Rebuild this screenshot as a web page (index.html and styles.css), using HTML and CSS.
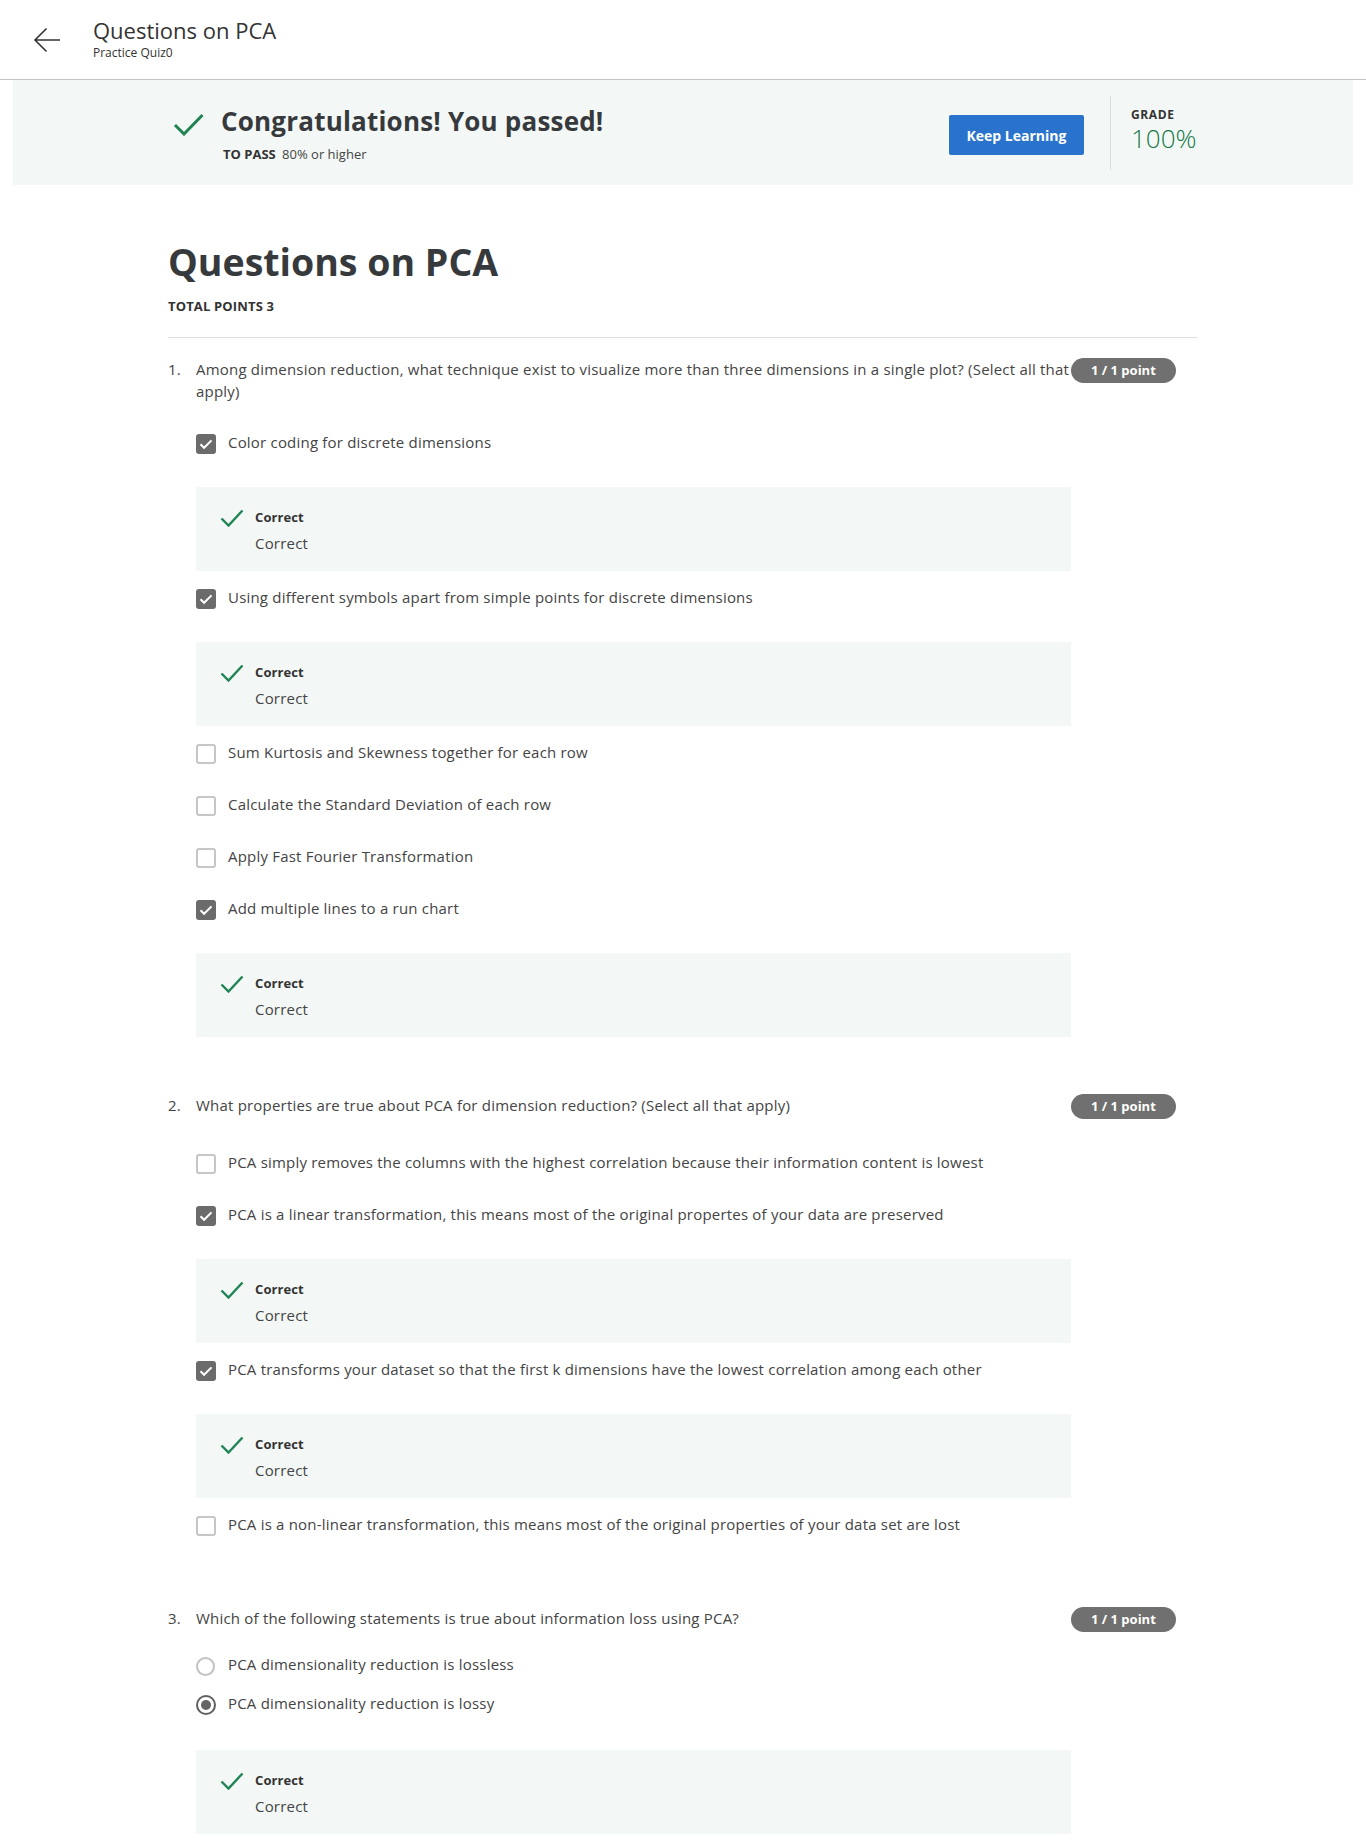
FILE: index.html
```html
<!DOCTYPE html>
<html lang="en">
<head>
<meta charset="utf-8">
<title>Questions on PCA</title>
<link rel="stylesheet" href="styles.css">
</head>
<body>
<header class="topbar">
  <span class="back" aria-label="Back">
    <svg width="28" height="26" viewBox="0 0 28 26"><path d="M27 13H2M13.5 1.5L2 13l11.5 11.5" fill="none" stroke="#333" stroke-width="1.6"/></svg>
  </span>
  <div class="topbar-titles">
    <div class="topbar-title">Questions on PCA</div>
    <div class="topbar-sub">Practice Quiz0</div>
  </div>
</header>

<section class="banner">
  <div class="banner-inner">
    <div class="pass">
      <svg class="pass-icon" width="31" height="23" viewBox="0 0 31 23"><path d="M2 12l9 9L29.5 2" fill="none" stroke="#1f8354" stroke-width="3"/></svg>
      <div>
        <div class="pass-title">Congratulations! You passed!</div>
        <div class="pass-sub"><b>TO PASS</b> 80% or higher</div>
      </div>
    </div>
    <button class="keep">Keep Learning</button>
    <div class="grade">
      <div class="grade-label">GRADE</div>
      <div class="grade-value">100%</div>
    </div>
  </div>
</section>

<main class="content">
  <h1 class="quiz-title">Questions on PCA</h1>
  <div class="total">TOTAL POINTS 3</div>
  <hr class="rule">

  <section class="question">
    <div class="q-num">1.</div>
    <div class="q-text">Among dimension reduction, what technique exist to visualize more than three dimensions in a single plot? (Select all that apply)</div>
    <div class="badge">1 / 1 point</div>
    <div class="options options-wrapped">
      <div class="option"><span class="box checked"><svg width="20" height="20" viewBox="0 0 20 20"><path d="M4.5 10.2l3.6 3.6L15.5 6.4" fill="none" stroke="#fff" stroke-width="2"/></svg></span><span class="label">Color coding for discrete dimensions</span></div>
      <div class="feedback"><svg class="fb-icon" width="24" height="18" viewBox="0 0 24 18"><path d="M1.5 9.5l7 7L22.5 1.5" fill="none" stroke="#1f8354" stroke-width="2.4"/></svg><div><div class="fb-title">Correct</div><div class="fb-text">Correct</div></div></div>
      <div class="option"><span class="box checked"><svg width="20" height="20" viewBox="0 0 20 20"><path d="M4.5 10.2l3.6 3.6L15.5 6.4" fill="none" stroke="#fff" stroke-width="2"/></svg></span><span class="label">Using different symbols apart from simple points for discrete dimensions</span></div>
      <div class="feedback"><svg class="fb-icon" width="24" height="18" viewBox="0 0 24 18"><path d="M1.5 9.5l7 7L22.5 1.5" fill="none" stroke="#1f8354" stroke-width="2.4"/></svg><div><div class="fb-title">Correct</div><div class="fb-text">Correct</div></div></div>
      <div class="option"><span class="box"></span><span class="label">Sum Kurtosis and Skewness together for each row</span></div>
      <div class="option"><span class="box"></span><span class="label">Calculate the Standard Deviation of each row</span></div>
      <div class="option"><span class="box"></span><span class="label">Apply Fast Fourier Transformation</span></div>
      <div class="option"><span class="box checked"><svg width="20" height="20" viewBox="0 0 20 20"><path d="M4.5 10.2l3.6 3.6L15.5 6.4" fill="none" stroke="#fff" stroke-width="2"/></svg></span><span class="label">Add multiple lines to a run chart</span></div>
      <div class="feedback"><svg class="fb-icon" width="24" height="18" viewBox="0 0 24 18"><path d="M1.5 9.5l7 7L22.5 1.5" fill="none" stroke="#1f8354" stroke-width="2.4"/></svg><div><div class="fb-title">Correct</div><div class="fb-text">Correct</div></div></div>
    </div>
  </section>

  <section class="question">
    <div class="q-num">2.</div>
    <div class="q-text">What properties are true about PCA for dimension reduction? (Select all that apply)</div>
    <div class="badge">1 / 1 point</div>
    <div class="options options-loose">
      <div class="option"><span class="box"></span><span class="label">PCA simply removes the columns with the highest correlation because their information content is lowest</span></div>
      <div class="option"><span class="box checked"><svg width="20" height="20" viewBox="0 0 20 20"><path d="M4.5 10.2l3.6 3.6L15.5 6.4" fill="none" stroke="#fff" stroke-width="2"/></svg></span><span class="label">PCA is a linear transformation, this means most of the original propertes of your data are preserved</span></div>
      <div class="feedback"><svg class="fb-icon" width="24" height="18" viewBox="0 0 24 18"><path d="M1.5 9.5l7 7L22.5 1.5" fill="none" stroke="#1f8354" stroke-width="2.4"/></svg><div><div class="fb-title">Correct</div><div class="fb-text">Correct</div></div></div>
      <div class="option"><span class="box checked"><svg width="20" height="20" viewBox="0 0 20 20"><path d="M4.5 10.2l3.6 3.6L15.5 6.4" fill="none" stroke="#fff" stroke-width="2"/></svg></span><span class="label">PCA transforms your dataset so that the first k dimensions have the lowest correlation among each other</span></div>
      <div class="feedback"><svg class="fb-icon" width="24" height="18" viewBox="0 0 24 18"><path d="M1.5 9.5l7 7L22.5 1.5" fill="none" stroke="#1f8354" stroke-width="2.4"/></svg><div><div class="fb-title">Correct</div><div class="fb-text">Correct</div></div></div>
      <div class="option"><span class="box"></span><span class="label">PCA is a non-linear transformation, this means most of the original properties of your data set are lost</span></div>
    </div>
  </section>

  <section class="question">
    <div class="q-num">3.</div>
    <div class="q-text">Which of the following statements is true about information loss using PCA?</div>
    <div class="badge">1 / 1 point</div>
    <div class="options">
      <div class="option radio-option"><span class="radio"></span><span class="label">PCA dimensionality reduction is lossless</span></div>
      <div class="option radio-option"><span class="radio selected"></span><span class="label">PCA dimensionality reduction is lossy</span></div>
      <div class="feedback feedback-radio"><svg class="fb-icon" width="24" height="18" viewBox="0 0 24 18"><path d="M1.5 9.5l7 7L22.5 1.5" fill="none" stroke="#1f8354" stroke-width="2.4"/></svg><div><div class="fb-title">Correct</div><div class="fb-text">Correct</div></div></div>
    </div>
  </section>
</main>
</body>
</html>
```

FILE: styles.css
```css
* { box-sizing: border-box; }

body {
  margin: 0;
  background: #fff;
  color: #444;
  font-family: "Open Sans", "Liberation Sans", sans-serif;
}

/* top bar */
.topbar {
  height: 80px;
  border-bottom: 1px solid #c4c4c4;
  display: flex;
  align-items: center;
  padding-left: 33px;
}
.back {
  display: flex;
  width: 28px;
  height: 26px;
  margin-right: 32px;
}
.topbar-titles {
  align-self: flex-start;
  margin-top: 16px;
}
.topbar-title {
  font-size: 22px;
  line-height: 28px;
  color: #333;
  margin-bottom: 1px;
}
.topbar-sub {
  font-size: 12px;
  line-height: 16px;
  color: #333;
}

/* pass banner */
.banner {
  margin: 0 13px;
  height: 105px;
  background: #f3f8f6;
  display: flex;
  justify-content: center;
}
.banner-inner {
  width: 1030px;
  display: flex;
  align-items: flex-start;
}
.pass {
  flex: 1;
  display: flex;
  align-items: flex-start;
  gap: 17px;
  padding-left: 5px;
  margin-top: 24px;
}
.pass-icon { margin-top: 9px; flex: none; }
.pass-title {
  font-size: 26px;
  line-height: 34px;
  font-weight: 700;
  letter-spacing: 0.2px;
  color: #373a3c;
}
.pass-sub {
  margin-top: 7px;
  padding-left: 2px;
  font-size: 13px;
  line-height: 18px;
  color: #444;
}
.pass-sub b { color: #333; margin-right: 3px; }
.keep {
  margin-top: 35px;
  width: 135px;
  height: 40px;
  border: 0;
  border-radius: 2px;
  background: #2a73cc;
  color: #fff;
  font-family: inherit;
  font-size: 14px;
  font-weight: 700;
  padding: 0;
}
.grade {
  margin-top: 16px;
  margin-left: 26px;
  height: 74px;
  width: 88px;
  border-left: 1px solid #dcdcdc;
  padding: 11px 0 0 20px;
}
.grade-label {
  font-size: 12px;
  line-height: 16px;
  font-weight: 700;
  letter-spacing: 0.6px;
  color: #333;
}
.grade-value {
  font-size: 26px;
  line-height: 30px;
  font-weight: 300;
  color: #17794a;
}

/* content */
.content {
  width: 1030px;
  margin: 0 auto;
  padding-top: 53px;
}
.quiz-title {
  margin: 0;
  font-size: 37.5px;
  line-height: 48px;
  font-weight: 700;
  color: #373a3c;
}
.total {
  margin-top: 11px;
  font-size: 13px;
  line-height: 18px;
  font-weight: 700;
  letter-spacing: 0.15px;
  color: #333;
}
.rule {
  margin: 22px 0 0;
  border: 0;
  border-top: 1px solid #e0e0e0;
  height: 0;
}

.question {
  display: grid;
  grid-template-columns: 28px 875px auto;
  align-items: start;
  padding: 20px 0 37px;
  font-size: 15px;
  letter-spacing: 0.2px;
}
.q-num { line-height: 22px; color: #444; }
.q-text { line-height: 22px; color: #444; }
.badge {
  justify-self: start;
  height: 25px;
  line-height: 25px;
  padding: 0 20px;
  border-radius: 13px;
  background: #707070;
  color: #fff;
  font-size: 13px;
  font-weight: 700;
  letter-spacing: 0;
  white-space: nowrap;
}
.options {
  grid-column: 2;
  margin-top: 12px;
}
.options-wrapped { margin-top: 14px; }
.options-loose { margin-top: 17px; }

.option {
  display: flex;
  align-items: flex-start;
  padding: 14px 0;
}
.radio-option { padding: 8px 0 7px; }
.label {
  margin-left: 12px;
  line-height: 24px;
  color: #444;
}
.box {
  flex: none;
  width: 20px;
  height: 20px;
  margin-top: 4px;
  border: 2px solid #c6c6c6;
  border-radius: 3px;
}
.box.checked {
  border: 0;
  background: #6b6b6b;
  display: flex;
}
.radio {
  flex: none;
  width: 19px;
  height: 19px;
  margin: 5px 1px 0 0;
  border: 2px solid #c2c2c2;
  border-radius: 50%;
  display: flex;
  align-items: center;
  justify-content: center;
}
.radio.selected {
  width: 20px;
  height: 20px;
  margin: 4px 0 0 0;
  border: 2.5px solid #5f5f5f;
}
.radio.selected::after {
  content: "";
  width: 10px;
  height: 10px;
  border-radius: 50%;
  background: #666;
}

.feedback {
  margin-top: 19px;
  height: 84px;
  padding: 21px 24px 16px;
  background: #f3f8f6;
  display: flex;
  align-items: flex-start;
  gap: 11px;
}
.feedback-radio { margin-top: 28px; }
.fb-icon { flex: none; margin-top: 1px; }
.fb-title {
  font-size: 13px;
  line-height: 18px;
  font-weight: 700;
  letter-spacing: 0.1px;
  color: #333;
}
.fb-text {
  margin-top: 5px;
  font-size: 15px;
  line-height: 24px;
  letter-spacing: 0.2px;
  color: #444;
}
```
